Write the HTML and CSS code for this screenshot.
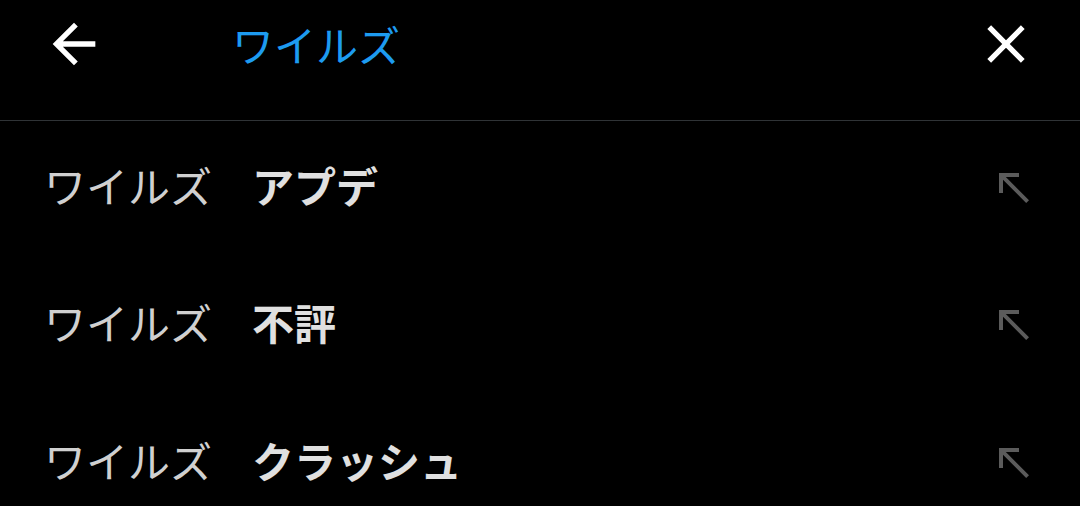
FILE: index.html
```html
<!DOCTYPE html>
<html lang="ja">
<head>
<meta charset="utf-8">
<link rel="stylesheet" href="styles.css">
</head>
<body>
<header class="bar">
  <button class="icon-btn back" aria-label="戻る">
    <svg viewBox="0 0 24 24" width="64" height="64"><path fill="#fff" d="M20 11H7.83l5.59-5.59L12 4l-8 8 8 8 1.41-1.41L7.830 13H20v-2z"/></svg>
  </button>
  <div class="query">ワイルズ</div>
  <button class="icon-btn close" aria-label="閉じる">
    <svg viewBox="0 0 24 24" width="64" height="64"><path fill="#fff" d="M19 6.41L17.59 5 12 10.59 6.41 5 5 6.41 10.59 12 5 17.590 6.41 19 12 13.41 17.59 19 19 17.59 13.41 12z"/></svg>
  </button>
</header>
<ul class="list">
  <li class="row"><span class="text"><span class="q">ワイルズ</span><b class="s">アプデ</b></span><svg class="fill" viewBox="0 0 24 24" width="48" height="48"><path d="M5 15h2V8.41L18.59 20 20 18.59 8.41 7H15V5H5z"/></svg></li>
  <li class="row"><span class="text"><span class="q">ワイルズ</span><b class="s">不評</b></span><svg class="fill" viewBox="0 0 24 24" width="48" height="48"><path d="M5 15h2V8.41L18.59 20 20 18.59 8.41 7H15V5H5z"/></svg></li>
  <li class="row"><span class="text"><span class="q">ワイルズ</span><b class="s">クラッシュ</b></span><svg class="fill" viewBox="0 0 24 24" width="48" height="48"><path d="M5 15h2V8.41L18.59 20 20 18.59 8.41 7H15V5H5z"/></svg></li>
</ul>
</body>
</html>
```

FILE: styles.css
```css
html, body {
  margin: 0;
  padding: 0;
  background: #000;
  width: 1080px;
  height: 506px;
  overflow: hidden;
  font-family: "Noto Sans CJK JP", "Noto Sans", sans-serif;
}
.bar {
  display: flex;
  align-items: center;
  height: 88px;
  padding: 0 42px 32px 42px;
  border-bottom: 1px solid #2f3336;
}
.icon-btn {
  background: none;
  border: 0;
  padding: 0;
  width: 64px;
  height: 64px;
  display: flex;
}
.query {
  flex: 1;
  margin-left: 126px;
  color: #1d9bf0;
  font-size: 42px;
  line-height: 1;
}
.list {
  list-style: none;
  margin: 0;
  padding: 0;
}
.row {
  display: flex;
  align-items: center;
  height: 137.5px;
  padding: 0 45px 0 44px;
  justify-content: space-between;
}
.row:first-child { margin-top: -5px; }
.text {
  font-size: 42px;
  line-height: 1;
  color: #d0d0d0;
}
.q { margin-right: 40px; }
.s { font-weight: 700; color: #e0e0e0; }
.fill { fill: #5b5b5b; margin-right: -2px; margin-top: 4px; }
```
